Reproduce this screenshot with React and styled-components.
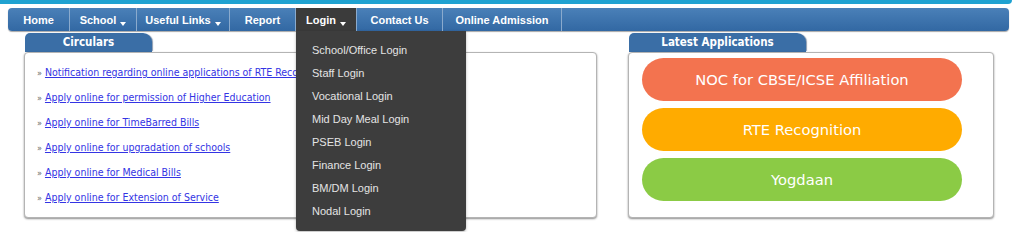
import React from "react";
import styled, { createGlobalStyle } from "styled-components";

const GlobalStyle = createGlobalStyle`
  html, body {
    margin: 0;
    padding: 0;
    background: #fff;
  }
  body {
    min-height: 232px;
    font-family: Tahoma, "DejaVu Sans Condensed", "DejaVu Sans", sans-serif;
    overflow: hidden;
  }
`;

const Page = styled.div`
  min-height: 232px;
`;

const HeaderStrip = styled.div`
  width: 1012px;
  height: 4px;
  background: #1fa2d1;
  border-bottom-right-radius: 6px;
`;

const NavBar = styled.nav`
  position: relative;
  z-index: 5;
  display: flex;
  align-items: stretch;
  margin: 4px 15px 0 8px;
  height: 23px;
  border-radius: 4px;
  background: linear-gradient(#4a80b8, #3268a3);
  box-shadow: 0 1px 1px rgba(0, 0, 0, 0.35);
`;

const NavItem = styled.div`
  position: relative;
  display: flex;
  align-items: center;
  justify-content: center;
  width: ${(p) => p.$w}px;
  border-right: 1px solid #8aaacd;
  color: #fff;
  font-family: "Liberation Sans", Arial, sans-serif;
  font-weight: bold;
  font-size: 11px;
  background: ${(p) => (p.$active ? "#3b3b3b" : "transparent")};
  box-sizing: border-box;
  &:first-child {
    border-top-left-radius: 4px;
    border-bottom-left-radius: 4px;
  }
`;

const Caret = styled.span`
  display: inline-block;
  margin: 0 0 0 4px;
  position: relative;
  top: 4px;
  border-left: 3.5px solid transparent;
  border-right: 3.5px solid transparent;
  border-top: 4px solid #fff;
`;

const Dropdown = styled.ul`
  position: absolute;
  top: 100%;
  left: 0;
  width: 170px;
  margin: 0;
  padding: 8px 0 8px;
  list-style: none;
  background: #3d3d3d;
  border-bottom-left-radius: 4px;
  border-bottom-right-radius: 4px;
  box-shadow: 0 1px 3px rgba(0, 0, 0, 0.3);
`;

const DropItem = styled.li`
  height: 23px;
  line-height: 23px;
  padding-left: 16px;
  color: #e4e4e4;
  font-family: "Liberation Sans", Arial, sans-serif;
  font-size: 11px;
  text-align: left;
  font-weight: normal;
`;

const Content = styled.div`
  display: flex;
  gap: 31px;
  padding: 2px 0 0 24px;
`;

const Panel = styled.section`
  width: ${(p) => p.$w}px;
  display: flex;
  flex-direction: column;
`;

const Tab = styled.div`
  width: ${(p) => p.$w}px;
  height: 19px;
  line-height: 19px;
  margin-left: 1px;
  text-align: center;
  color: #fff;
  font-weight: bold;
  font-size: 11.5px;
  background: #3a6ea6;
  border-top-left-radius: 5px;
  border-top-right-radius: 9px;
  box-shadow: 2px 0 1px -1px #8a9bb0;
`;

const Box = styled.div`
  height: 164px;
  border: 1px solid #b4b4b4;
  border-radius: 4px;
  box-shadow: 0 1px 2px rgba(0, 0, 0, 0.45);
  background: #fff;
`;

const LinkList = styled.ul`
  list-style: none;
  margin: 0;
  padding: 11px 0 0 12px;
`;

const LinkRow = styled.li`
  height: 25px;
  line-height: 16px;
  font-size: 10.5px;
  white-space: nowrap;
  overflow: hidden;
  color: #666;
`;

const Bullet = styled.span`
  font-size: 9px;
  margin-right: 3px;
`;

const Circular = styled.a`
  color: #3434e4;
  text-decoration: underline;
`;

const AppList = styled.div`
  display: flex;
  flex-direction: column;
  gap: 7px;
  padding: 5px 0 0 13px;
`;

const AppButton = styled.div`
  width: 320px;
  height: 43px;
  border-radius: 22px;
  background: ${(p) => p.$bg};
  color: #fff;
  display: flex;
  align-items: center;
  justify-content: center;
  font-family: "DejaVu Sans", Verdana, sans-serif;
  font-size: 14.7px;
`;

const navItems = [
  { label: "Home", w: 62 },
  { label: "School", w: 67, caret: true },
  { label: "Useful Links", w: 93, caret: true },
  { label: "Report", w: 66 },
  { label: "Login", w: 61, caret: true, active: true },
  { label: "Contact Us", w: 86 },
  { label: "Online Admission", w: 119 },
];

const loginLinks = [
  "School/Office Login",
  "Staff Login",
  "Vocational Login",
  "Mid Day Meal Login",
  "PSEB Login",
  "Finance Login",
  "BM/DM Login",
  "Nodal Login",
];

const circulars = [
  "Notification regarding online applications of RTE Recognition",
  "Apply online for permission of Higher Education",
  "Apply online for TimeBarred Bills",
  "Apply online for upgradation of schools",
  "Apply online for Medical Bills",
  "Apply online for Extension of Service",
];

const apps = [
  { label: "NOC for CBSE/ICSE Affiliation", bg: "#f3734f" },
  { label: "RTE Recognition", bg: "#ffab00" },
  { label: "Yogdaan", bg: "#8bcb45" },
];

const App = () => {
  return (
    <Page>
      <GlobalStyle />
      <HeaderStrip />
      <NavBar>
        {navItems.map((item) => (
          <NavItem key={item.label} $w={item.w} $active={item.active}>
            {item.label}
            {item.caret && <Caret />}
            {item.active && (
              <Dropdown>
                {loginLinks.map((l) => (
                  <DropItem key={l}>{l}</DropItem>
                ))}
              </Dropdown>
            )}
          </NavItem>
        ))}
      </NavBar>
      <Content>
        <Panel $w={573}>
          <Tab $w={127}>Circulars</Tab>
          <Box>
            <LinkList>
              {circulars.map((c) => (
                <LinkRow key={c}>
                  <Bullet>»</Bullet>
                  <Circular href="#">{c}</Circular>
                </LinkRow>
              ))}
            </LinkList>
          </Box>
        </Panel>
        <Panel $w={366}>
          <Tab $w={177}>Latest Applications</Tab>
          <Box>
            <AppList>
              {apps.map((a) => (
                <AppButton key={a.label} $bg={a.bg}>
                  {a.label}
                </AppButton>
              ))}
            </AppList>
          </Box>
        </Panel>
      </Content>
    </Page>
  );
};

export default App;
